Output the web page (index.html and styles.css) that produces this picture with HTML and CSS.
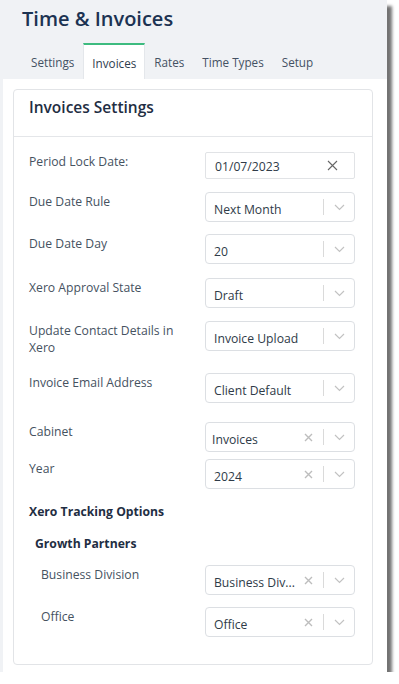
FILE: index.html
```html
<!DOCTYPE html>
<html>
<head>
<meta charset="utf-8">
<link rel="stylesheet" href="styles.css">
</head>
<body>
<div class="frame">
  <div class="header">
    <h1 class="title">Time &amp; Invoices</h1>
    <nav class="tabs">
      <span class="tab">Settings</span>
      <span class="tab active">Invoices</span>
      <span class="tab">Rates</span>
      <span class="tab">Time Types</span>
      <span class="tab">Setup</span>
    </nav>
  </div>
  <div class="panel">
    <div class="card">
      <div class="card-header">Invoices Settings</div>
      <div class="card-body">
        <div class="row">
          <div class="label">Period Lock Date:</div>
          <div class="date">
            <span class="value">01/07/2023</span>
            <svg class="date-x" width="11" height="11" viewBox="0 0 11 11"><path d="M1 1L10 10M10 1L1 10" stroke="#666" stroke-width="1.1" fill="none"/></svg>
          </div>
        </div>
        <div class="row mt13">
          <div class="label">Due Date Rule</div>
          <div class="select"><span class="value">Next Month</span><span class="sep"></span><svg class="chev" width="11" height="7" viewBox="0 0 11 7"><path d="M1 1L5.5 5.5L10 1" stroke="#c2c2c2" stroke-width="1.2" fill="none"/></svg></div>
        </div>
        <div class="row mt12">
          <div class="label">Due Date Day</div>
          <div class="select"><span class="value">20</span><span class="sep"></span><svg class="chev" width="11" height="7" viewBox="0 0 11 7"><path d="M1 1L5.5 5.5L10 1" stroke="#c2c2c2" stroke-width="1.2" fill="none"/></svg></div>
        </div>
        <div class="row mt14">
          <div class="label">Xero Approval State</div>
          <div class="select"><span class="value">Draft</span><span class="sep"></span><svg class="chev" width="11" height="7" viewBox="0 0 11 7"><path d="M1 1L5.5 5.5L10 1" stroke="#c2c2c2" stroke-width="1.2" fill="none"/></svg></div>
        </div>
        <div class="row mt13">
          <div class="label">Update Contact Details in Xero</div>
          <div class="select"><span class="value">Invoice Upload</span><span class="sep"></span><svg class="chev" width="11" height="7" viewBox="0 0 11 7"><path d="M1 1L5.5 5.5L10 1" stroke="#c2c2c2" stroke-width="1.2" fill="none"/></svg></div>
        </div>
        <div class="row mt17">
          <div class="label">Invoice Email Address</div>
          <div class="select"><span class="value">Client Default</span><span class="sep"></span><svg class="chev" width="11" height="7" viewBox="0 0 11 7"><path d="M1 1L5.5 5.5L10 1" stroke="#c2c2c2" stroke-width="1.2" fill="none"/></svg></div>
        </div>
        <div class="row mt19">
          <div class="label">Cabinet</div>
          <div class="select"><span class="value tight">Invoices</span><svg class="clr" width="9" height="9" viewBox="0 0 9 9"><path d="M1 1L8 8M8 1L1 8" stroke="#bdbdbd" stroke-width="1.4" fill="none"/></svg><span class="sep"></span><svg class="chev" width="11" height="7" viewBox="0 0 11 7"><path d="M1 1L5.5 5.5L10 1" stroke="#c2c2c2" stroke-width="1.2" fill="none"/></svg></div>
        </div>
        <div class="row mt7">
          <div class="label">Year</div>
          <div class="select"><span class="value">2024</span><svg class="clr" width="9" height="9" viewBox="0 0 9 9"><path d="M1 1L8 8M8 1L1 8" stroke="#bdbdbd" stroke-width="1.4" fill="none"/></svg><span class="sep"></span><svg class="chev" width="11" height="7" viewBox="0 0 11 7"><path d="M1 1L5.5 5.5L10 1" stroke="#c2c2c2" stroke-width="1.2" fill="none"/></svg></div>
        </div>
        <div class="section-title">Xero Tracking Options</div>
        <div class="sub-title">Growth Partners</div>
        <div class="row indent">
          <div class="label">Business Division</div>
          <div class="select"><span class="value">Business Div...</span><svg class="clr" width="9" height="9" viewBox="0 0 9 9"><path d="M1 1L8 8M8 1L1 8" stroke="#bdbdbd" stroke-width="1.4" fill="none"/></svg><span class="sep"></span><svg class="chev" width="11" height="7" viewBox="0 0 11 7"><path d="M1 1L5.5 5.5L10 1" stroke="#c2c2c2" stroke-width="1.2" fill="none"/></svg></div>
        </div>
        <div class="row indent mt12">
          <div class="label">Office</div>
          <div class="select"><span class="value">Office</span><svg class="clr" width="9" height="9" viewBox="0 0 9 9"><path d="M1 1L8 8M8 1L1 8" stroke="#bdbdbd" stroke-width="1.4" fill="none"/></svg><span class="sep"></span><svg class="chev" width="11" height="7" viewBox="0 0 11 7"><path d="M1 1L5.5 5.5L10 1" stroke="#c2c2c2" stroke-width="1.2" fill="none"/></svg></div>
        </div>
      </div>
    </div>
  </div>
</div>
</body>
</html>
```

FILE: styles.css
```css
* { box-sizing: border-box; }
html, body { margin: 0; padding: 0; background: #ffffff; }
body { font-family: "Open Sans", "Noto Sans", sans-serif; }

.frame {
  width: 387px;
  height: 672px;
  background: #f0f2f5;
  box-shadow: 5px 6px 3px rgba(0, 0, 0, 0.55);
  display: flex;
  flex-direction: column;
}

.header { padding: 5px 0 0 0; }

.title {
  margin: 0 0 0 22px;
  font-size: 20px;
  line-height: 28px;
  font-weight: 600;
  color: #1c3352;
  letter-spacing: 0;
}

.tabs {
  display: flex;
  margin: 10px 0 0 22px;
  height: 36px;
}

.tab {
  padding: 0 8px;
  font-size: 11.7px;
  line-height: 34px;
  color: #445163;
  border-top: 2px solid transparent;
  border-left: 1px solid transparent;
  border-right: 1px solid transparent;
}

.tab.active {
  background: #ffffff;
  border-top-color: #3dbb7f;
  border-left-color: #e4e7eb;
  border-right-color: #e4e7eb;
  color: #2f3d4f;
  line-height: 37px;
}

.panel {
  flex: 1;
  margin-left: 3px;
  background: #ffffff;
  padding: 10px 14px 7px 10px;
  display: flex;
}

.card {
  flex: 1;
  border: 1px solid #e2e4e7;
  border-radius: 4px;
  display: flex;
  flex-direction: column;
}

.card-header {
  height: 47px;
  padding: 6px 15px 0;
  font-size: 15.5px;
  line-height: 22px;
  font-weight: 600;
  color: #1f2e43;
  border-bottom: 1px solid #e4e6e9;
}

.card-body {
  padding: 15px 16px 0 15px;
}

.row {
  display: flex;
  align-items: flex-start;
}

.mt7 { margin-top: 7px; }
.mt12 { margin-top: 12px; }
.mt13 { margin-top: 13px; }
.mt14 { margin-top: 14px; }
.mt17 { margin-top: 17px; }
.mt19 { margin-top: 19px; }

.label {
  width: 176px;
  flex: none;
  padding: 1px 14px 0 0;
  font-size: 12.2px;
  line-height: 17px;
  color: #46525f;
}

.row.indent .label {
  width: 164px;
  margin-left: 12px;
}

.date {
  width: 150px;
  height: 27px;
  border: 1px solid #e1e3e6;
  border-radius: 2px;
  display: flex;
  align-items: center;
  padding: 0 0 0 9px;
}

.date .value {
  flex: 1;
  padding-top: 2px;
}

.date-x { margin-right: 16px; }

.value {
  font-size: 12.2px;
  line-height: 18px;
  color: #2f3b48;
  white-space: nowrap;
}

.select {
  width: 150px;
  height: 30px;
  border: 1px solid #dcdfe3;
  border-radius: 4px;
  display: flex;
  align-items: center;
  padding-left: 8px;
}

.select .value {
  flex: 1;
  padding-top: 6px;
  overflow: hidden;
}

.select .value.tight { margin-left: -2px; }

.clr { margin-right: 10px; flex: none; }

.sep {
  width: 1px;
  height: 16px;
  background: #dadada;
  flex: none;
}

.chev {
  margin: 0 9px 0 10px;
  flex: none;
}

.section-title {
  margin-top: 14px;
  font-size: 12.2px;
  line-height: 18px;
  font-weight: 700;
  color: #1f2e43;
}

.sub-title {
  margin: 14px 0 12px 6px;
  font-size: 12.2px;
  line-height: 18px;
  font-weight: 700;
  color: #1f2e43;
}
```
